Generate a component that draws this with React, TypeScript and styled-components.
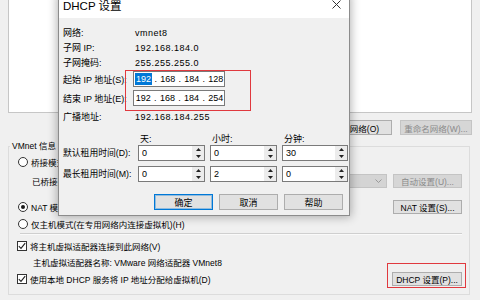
import React from "react";
import styled, { createGlobalStyle } from "styled-components";

const FONT = `"Liberation Sans", "Noto Sans CJK SC", sans-serif`;

const GlobalStyle = createGlobalStyle`
  html, body { margin: 0; padding: 0; }
  body { background: #f0f0f0; font-family: ${FONT}; }
  * { box-sizing: border-box; }
`;

const Screen = styled.div`
  position: relative;
  width: 480px;
  height: 300px;
  overflow: hidden;
  background: #f0f0f0;
  font-family: ${FONT};
  font-size: 8.5px;
  color: #000;
`;

/* ---------- background window (Virtual Network Editor) ---------- */
const MainWindow = styled.div`
  display: flex;
  flex-direction: column;
  padding-left: 8px;
  width: 472px;
`;

const ListPane = styled.div`
  height: 113px;
  background: #fff;
  border: 1px solid #c6c6c6;
  border-top: none;
`;

const ButtonBar = styled.div`
  display: flex;
  justify-content: flex-end;
  gap: 8px;
  margin-top: 7px;
`;

const WinButton = styled.div<{ $w: number; $off?: boolean; $h?: number; $ml?: string }>`
  width: ${(p) => p.$w}px;
  height: ${(p) => p.$h ?? 15}px;
  margin-left: ${(p) => p.$ml ?? "0"};
  flex: none;
  background: ${(p) => (p.$off ? "#d6d6d6" : "#e1e1e1")};
  border: 1px solid ${(p) => (p.$off ? "#c4c4c4" : "#adadad")};
  color: ${(p) => (p.$off ? "#8a8a8a" : "#000")};
  display: flex;
  align-items: center;
  justify-content: center;
  white-space: nowrap;
`;

const GroupBox = styled.fieldset`
  margin: 4px 0 0 0;
  width: 462px;
  border: 1px solid #dcdcdc;
  padding: 0 7px 7px 1px;
  min-width: 0;
`;

const Legend = styled.legend`
  padding: 0 2px;
  line-height: 14px;
`;

const GroupBody = styled.div`
  display: flex;
  flex-direction: column;
`;

const GRow = styled.div<{ $mt: number; $indent?: number }>`
  display: flex;
  align-items: center;
  height: 16px;
  margin-top: ${(p) => p.$mt}px;
  padding-left: ${(p) => p.$indent ?? 0}px;
  white-space: nowrap;
`;

const Radio = styled.span<{ $checked?: boolean }>`
  width: 10px;
  height: 10px;
  border-radius: 50%;
  border: 1px solid #333;
  background: #fff;
  display: inline-flex;
  align-items: center;
  justify-content: center;
  flex: none;
  margin-right: 3px;
  &::after {
    content: "";
    width: 4px;
    height: 4px;
    border-radius: 50%;
    background: ${(p) => (p.$checked ? "#1a1a1a" : "transparent")};
  }
`;

const CheckBox = styled.span`
  width: 10px;
  height: 10px;
  border: 1px solid #333;
  background: #fff;
  display: inline-flex;
  align-items: center;
  justify-content: center;
  flex: none;
  margin-right: 3px;
`;

const SelectBox = styled.div`
  flex: 1;
  height: 14px;
  margin-left: 6px;
  margin-right: 6px;
  background: #d4d4d4;
  border: 1px solid #c4c4c4;
  display: flex;
  align-items: center;
  justify-content: flex-end;
  padding-right: 4px;
`;

const Separator = styled.div`
  margin: 1px 0 0 10px;
  height: 2px;
  border-top: 1px solid #cfcfcf;
  border-bottom: 1px solid #fafafa;
`;

/* ---------- DHCP dialog ---------- */
const Dialog = styled.div`
  position: absolute;
  left: 58px;
  top: -6px;
  width: 292px;
  height: 222px;
  background: #f0f0f0;
  border: 1px solid #8c8c8c;
  box-shadow: 0 0 9px 1px rgba(0, 0, 0, 0.3);
  display: flex;
  flex-direction: column;
  font-size: 9px;
`;

const TitleBar = styled.div`
  height: 23px;
  flex: none;
  background: #fff;
  display: flex;
  align-items: center;
  justify-content: space-between;
  padding: 0 8px 4px 4px;
`;

const Title = styled.span`
  font-size: 11.5px;
`;

const DialogBody = styled.div`
  display: flex;
  flex-direction: column;
  padding: 7px 6px 0 4px;
`;

const InfoRow = styled.div<{ $mt?: number; $h?: number }>`
  display: grid;
  grid-template-columns: 70px 1fr;
  align-items: center;
  height: ${(p) => p.$h ?? 15}px;
  margin-top: ${(p) => p.$mt ?? 0}px;
  white-space: nowrap;
`;

const Value = styled.span`
  padding-left: 2px;
  letter-spacing: 0.5px;
`;

const IPField = styled.div`
  width: 92px;
  height: 16px;
  background: #fff;
  border: 1px solid #7a7a7a;
  display: flex;
  align-items: center;
  padding-left: 1px;
`;

const IPSeg = styled.span`
  width: 17px;
  text-align: center;
`;

const IPDot = styled.span`
  width: 8px;
  text-align: center;
`;

const Selected = styled.span`
  background: #0078d7;
  color: #fff;
  padding: 1px 1px;
`;

const LeaseGrid = styled.div`
  display: grid;
  grid-template-columns: 70px 67px 67px 66px;
  column-gap: 5px;
  grid-template-rows: 12px 16px 21px;
  margin-top: 9px;
  align-items: end;
  white-space: nowrap;
`;

const LeaseHead = styled.span`
  padding-left: 2px;
  line-height: 12px;
`;

const LeaseLabel = styled.span`
  line-height: 16px;
  font-size: 8.8px;
`;

const SpinBox = styled.div`
  height: 16px;
  background: #fff;
  border: 1px solid #7a7a7a;
  display: flex;
  align-items: stretch;
`;

const SpinValue = styled.span`
  flex: 1;
  padding-left: 3px;
  display: flex;
  align-items: center;
`;

const SpinArrows = styled.div`
  width: 12px;
  display: flex;
  flex-direction: column;
  background: #ececec;
`;

const SpinHalf = styled.div`
  flex: 1;
  display: flex;
  align-items: center;
  justify-content: center;
`;

const DlgButtons = styled.div`
  display: flex;
  justify-content: flex-end;
  gap: 6px;
  margin-top: 12px;
`;

const DlgButton = styled.div<{ $default?: boolean }>`
  width: 59px;
  height: 16px;
  background: #e1e1e1;
  border: 1px solid ${(p) => (p.$default ? "#0078d7" : "#adadad")};
  box-shadow: ${(p) => (p.$default ? "inset 0 0 0 1px rgba(0,120,215,0.35)" : "none")};
  display: flex;
  align-items: center;
  justify-content: center;
`;

const RedMark = styled.div<{ $x: number; $y: number; $w: number; $h: number }>`
  position: absolute;
  left: ${(p) => p.$x}px;
  top: ${(p) => p.$y}px;
  width: ${(p) => p.$w}px;
  height: ${(p) => p.$h}px;
  border: 1.5px solid #e0393e;
  pointer-events: none;
`;

const Check = () => (
  <svg width="8" height="8" viewBox="0 0 8 8">
    <path d="M0.8 4.2 L3 6.4 L7.2 1.2" fill="none" stroke="#222" strokeWidth="1.1" />
  </svg>
);

const Chevron = () => (
  <svg width="7" height="4" viewBox="0 0 7 4">
    <path d="M0.5 0.5 L3.5 3.5 L6.5 0.5" fill="none" stroke="#999" strokeWidth="1" />
  </svg>
);

const Tri = ({ up }: { up?: boolean }) => (
  <svg width="5" height="3" viewBox="0 0 5 3">
    <path d={up ? "M0 3 L2.5 0 L5 3 Z" : "M0 0 L2.5 3 L5 0 Z"} fill="#222" />
  </svg>
);

const Spin = ({ v }: { v: string }) => (
  <SpinBox>
    <SpinValue>{v}</SpinValue>
    <SpinArrows>
      <SpinHalf>
        <Tri up />
      </SpinHalf>
      <SpinHalf>
        <Tri />
      </SpinHalf>
    </SpinArrows>
  </SpinBox>
);

const IP = ({ parts, selectFirst }: { parts: string[]; selectFirst?: boolean }) => (
  <IPField>
    {parts.map((p, i) => (
      <React.Fragment key={i}>
        {i > 0 && <IPDot>.</IPDot>}
        <IPSeg>{i === 0 && selectFirst ? <Selected>{p}</Selected> : p}</IPSeg>
      </React.Fragment>
    ))}
  </IPField>
);

export default function App() {
  return (
    <>
      <GlobalStyle />
      <Screen>
        <MainWindow>
          <ListPane />
          <ButtonBar>
            <WinButton $w={72}>移除网络(O)</WinButton>
            <WinButton $w={72} $off>
              重命名网络(W)...
            </WinButton>
          </ButtonBar>
          <GroupBox>
            <Legend>VMnet 信息</Legend>
            <GroupBody>
              <GRow $mt={1} $indent={8}>
                <Radio />
                桥接模式(将虚拟机直接连接到外部网络)(B)
              </GRow>
              <GRow $mt={3} $indent={22}>
                已桥接至(G):
                <SelectBox>
                  <Chevron />
                </SelectBox>
                <WinButton $w={69} $h={14} $off>
                  自动设置(U)...
                </WinButton>
              </GRow>
              <GRow $mt={10} $indent={8}>
                <Radio $checked />
                NAT 模式(与虚拟机共享主机的 IP 地址)(N)
                <WinButton $w={69} $h={14} $ml="auto">
                  NAT 设置(S)...
                </WinButton>
              </GRow>
              <GRow $mt={1} $indent={8}>
                <Radio />
                仅主机模式(在专用网络内连接虚拟机)(H)
              </GRow>
              <Separator />
              <GRow $mt={3} $indent={7}>
                <CheckBox>
                  <Check />
                </CheckBox>
                将主机虚拟适配器连接到此网络(V)
              </GRow>
              <GRow $mt={0} $indent={23}>
                主机虚拟适配器名称: VMware 网络适配器 VMnet8
              </GRow>
              <GRow $mt={1} $indent={7}>
                <CheckBox>
                  <Check />
                </CheckBox>
                使用本地 DHCP 服务将 IP 地址分配给虚拟机(D)
                <WinButton $w={70} $h={14} $ml="auto">
                  DHCP 设置(P)...
                </WinButton>
              </GRow>
            </GroupBody>
          </GroupBox>
        </MainWindow>

        <Dialog>
          <TitleBar>
            <Title>DHCP 设置</Title>
            <svg width="9" height="9" viewBox="0 0 9 9">
              <path d="M0.5 0.5 L8.5 8.5 M8.5 0.5 L0.5 8.5" stroke="#333" strokeWidth="1" />
            </svg>
          </TitleBar>
          <DialogBody>
            <InfoRow>
              <span>网络:</span>
              <Value>vmnet8</Value>
            </InfoRow>
            <InfoRow>
              <span>子网 IP:</span>
              <Value>192.168.184.0</Value>
            </InfoRow>
            <InfoRow>
              <span>子网掩码:</span>
              <Value>255.255.255.0</Value>
            </InfoRow>
            <InfoRow $mt={1} $h={16}>
              <span>起始 IP 地址(S):</span>
              <IP parts={["192", "168", "184", "128"]} selectFirst />
            </InfoRow>
            <InfoRow $mt={3} $h={16}>
              <span>结束 IP 地址(E):</span>
              <IP parts={["192", "168", "184", "254"]} />
            </InfoRow>
            <InfoRow $mt={3}>
              <span>广播地址:</span>
              <Value>192.168.184.255</Value>
            </InfoRow>
            <LeaseGrid>
              <span />
              <LeaseHead>天:</LeaseHead>
              <LeaseHead>小时:</LeaseHead>
              <LeaseHead>分钟:</LeaseHead>
              <LeaseLabel>默认租用时间(D):</LeaseLabel>
              <Spin v="0" />
              <Spin v="0" />
              <Spin v="30" />
              <LeaseLabel>最长租用时间(M):</LeaseLabel>
              <Spin v="0" />
              <Spin v="2" />
              <Spin v="0" />
            </LeaseGrid>
            <DlgButtons>
              <DlgButton $default>确定</DlgButton>
              <DlgButton>取消</DlgButton>
              <DlgButton>帮助</DlgButton>
            </DlgButtons>
          </DialogBody>
        </Dialog>

        <RedMark $x={125} $y={70} $w={126} $h={41} />
        <RedMark $x={387} $y={263} $w={79} $h={25} />
      </Screen>
    </>
  );
}
